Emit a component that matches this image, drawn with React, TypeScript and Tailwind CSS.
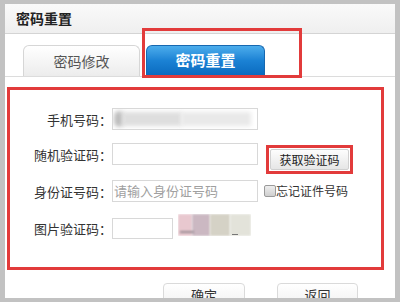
const font = "font-['Noto_Sans_CJK_SC','Noto_Sans',sans-serif]";

const Label = ({ text }: { text: string }) => (
  <div className="flex h-[22px] w-[102px] items-center justify-end text-[13px] leading-none text-[#333]">
    {text}
  </div>
);

const App = () => {
  return (
    <div className={`relative h-[302px] w-[400px] overflow-hidden bg-[#c2c2c2] pb-[4px] pl-[5px] pr-[5px] pt-[4px] ${font}`}>
      <div className="flex h-full flex-col overflow-hidden bg-white">
        {/* title bar */}
        <div className="flex h-[30px] shrink-0 items-center border-b border-[#d4d4d4] bg-gradient-to-b from-[#fafafa] to-[#efefef] pl-[11px] text-[14px] font-bold text-[#222]">
          密码重置
        </div>

        {/* tabs */}
        <div className="flex h-[43px] shrink-0 items-end gap-[6px] border-b border-[#dcdcdc] pl-[18px]">
          <div className="flex h-[31px] w-[117px] items-center justify-center rounded-t-[6px] border border-b-0 border-[#d6d6d6] bg-gradient-to-b from-white to-[#ececec] text-[14px] text-[#555]">
            密码修改
          </div>
          <div className="mb-[1px] flex h-[30px] w-[119px] items-center justify-center rounded-t-[6px] border border-b-0 border-[#1768b0] bg-gradient-to-b from-[#4badec] via-[#1b82d4] to-[#0a6bc0] text-[15px] font-bold text-white">
            密码重置
          </div>
        </div>

        {/* form */}
        <div className="ml-[2px] mt-[10px] h-[183px] w-[377px] shrink-0 border-[3px] border-[#e23b3b] pt-[18px]">
          <div className="flex items-center">
            <Label text="手机号码：" />
            <div className="relative h-[22px] w-[146px] overflow-hidden border border-[#d8d8d8] bg-white">
              <div className="absolute left-[1px] top-[2px] h-[16px] w-[10px] rounded-full bg-[#bdbdbd] blur-[2px]" />
              <div className="absolute left-[9px] top-[3px] h-[14px] w-[60px] bg-[#dedede] blur-[2px]" />
              <div className="absolute left-[68px] top-[3px] h-[14px] w-[70px] bg-[#e9e9e9] blur-[2px]" />
            </div>
          </div>

          <div className="mt-[13px] flex items-start">
            <Label text="随机验证码：" />
            <div className="h-[22px] w-[146px] border border-[#d8d8d8] bg-white" />
            <div className="ml-[8px] mt-[2px] h-[29px] w-[87px] border-[3px] border-[#e23b3b] p-[1px]">
              <div className="flex h-full items-center justify-center rounded-[2px] border border-[#d0d0d0] bg-gradient-to-b from-[#fdfdfd] to-[#e6e6e6] text-[12px] text-[#222]">
                获取验证码
              </div>
            </div>
          </div>

          <div className="mt-[6px] flex items-center">
            <Label text="身份证号码：" />
            <div className="flex h-[22px] w-[146px] items-center border border-[#d8d8d8] bg-white pl-[1px] text-[13px] text-[#a0a0a0]">
              请输入身份证号码
            </div>
            <div className="ml-[6px] h-[12px] w-[12px] rounded-[2px] border border-[#9a9a9a] bg-gradient-to-b from-[#eeeeee] to-[#cfcfcf]" />
            <span className="text-[12px] text-[#333]">忘记证件号码</span>
          </div>

          <div className="mt-[15px] flex items-center">
            <Label text="图片验证码：" />
            <div className="h-[21px] w-[61px] border border-[#d8d8d8] bg-white" />
            <div className="relative ml-[5px] mt-[-6px] flex h-[22px] w-[73px] overflow-hidden">
              <div className="h-full w-[14px] bg-[#e8c8cf] blur-[1px]" />
              <div className="h-full w-[18px] bg-[#cbb8c2] blur-[1px]" />
              <div className="h-full w-[20px] bg-[#d5d2c6] blur-[1px]" />
              <div className="h-full w-[21px] bg-[#e3e3da] blur-[1px]" />
              <div className="absolute bottom-[3px] left-[2px] h-[2px] w-[14px] bg-[#9a8c93] blur-[1px]" />
              <div className="absolute bottom-[1px] left-[54px] h-[1px] w-[6px] bg-[#777]" />
            </div>
          </div>
        </div>

        {/* buttons */}
        <div className="ml-[158px] mt-[13px] flex shrink-0 gap-[32px]">
          <div className="flex h-[26px] w-[82px] justify-center rounded-[4px] border border-[#dadada] bg-gradient-to-b from-white to-[#f0f0f0] pt-[3px] text-[13px] leading-[16px] text-[#333]">
            确定
          </div>
          <div className="flex h-[26px] w-[81px] justify-center rounded-[4px] border border-[#dadada] bg-gradient-to-b from-white to-[#f0f0f0] pt-[3px] text-[13px] leading-[16px] text-[#333]">
            返回
          </div>
        </div>
      </div>

      {/* annotation around active tab */}
      <div className="absolute left-[142px] top-[28px] h-[50px] w-[160px] border-[3px] border-[#e23b3b]" />
    </div>
  );
};

export default App;
